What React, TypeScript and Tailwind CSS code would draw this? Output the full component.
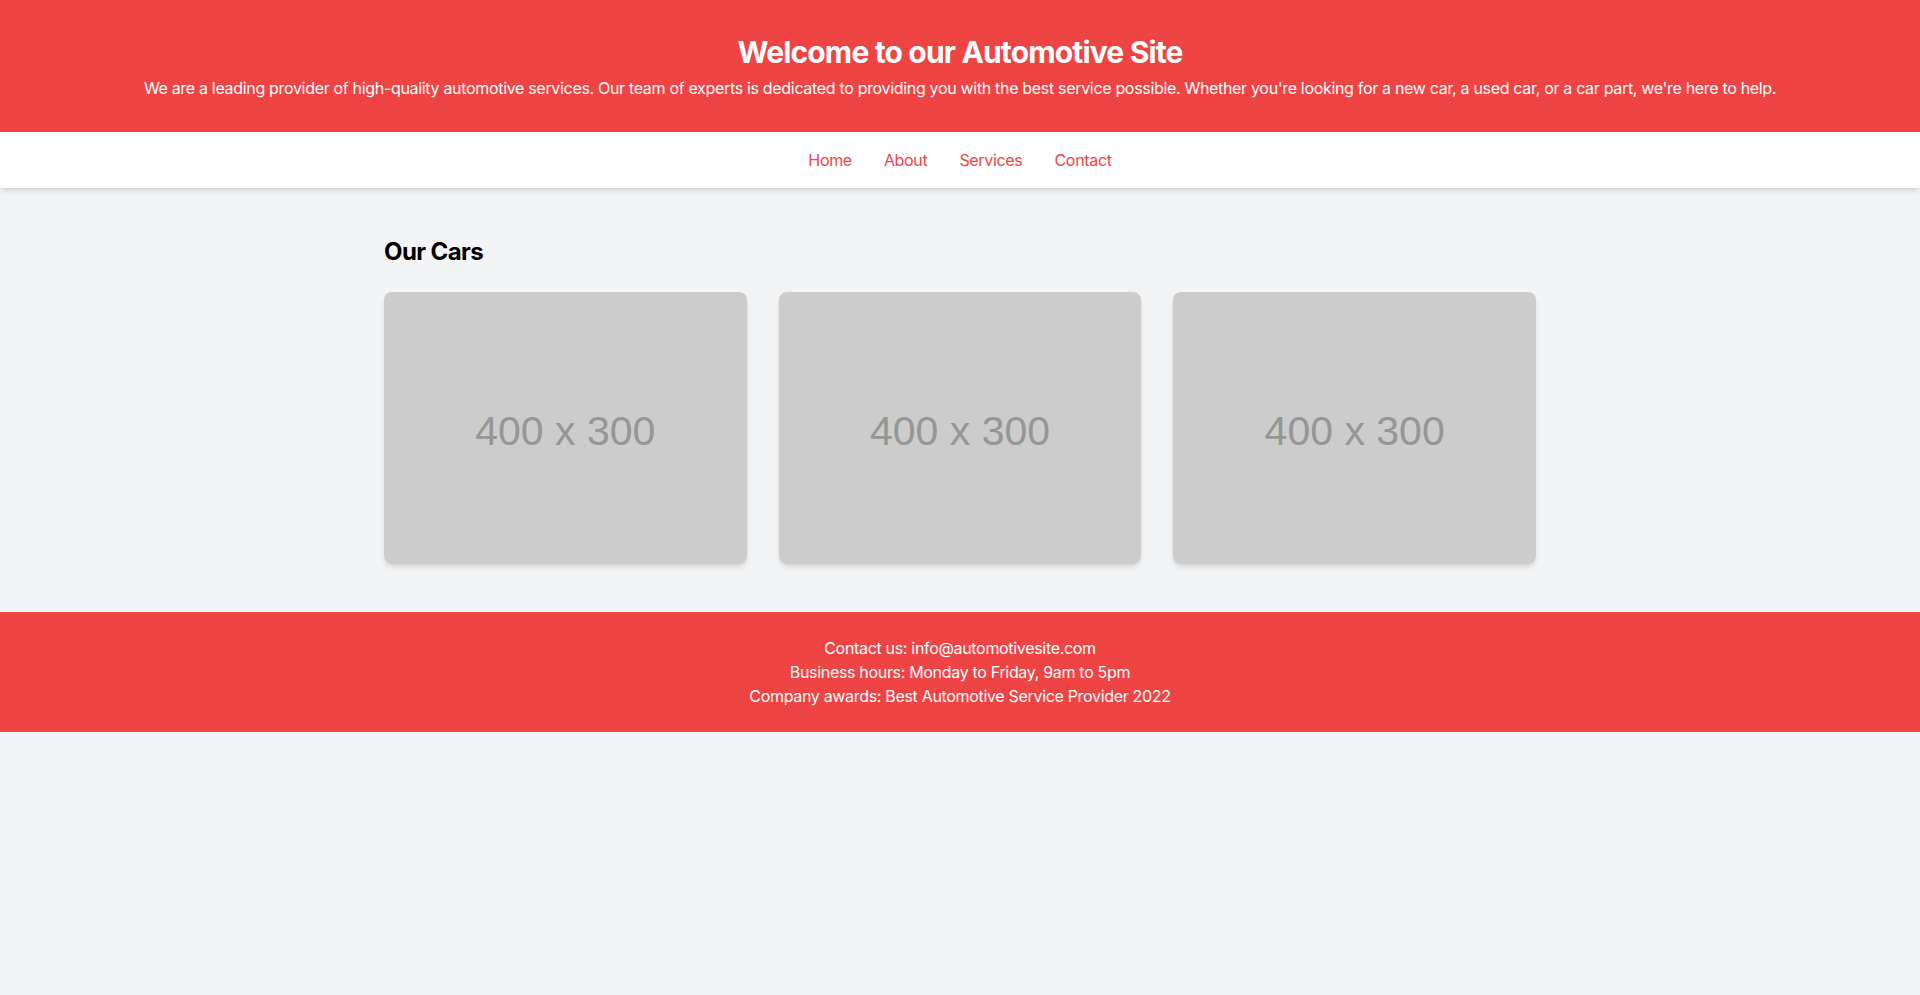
const cars = [1, 2, 3];

export default function App() {
  return (
    <div className="min-h-screen bg-gray-100 font-['Inter',sans-serif] tracking-[-0.02em]">
      {/* Header */}
      <header className="bg-[#ef4444] py-8 text-center text-white">
        <h1 className="mt-0.5 mb-1.5 text-3xl font-bold tracking-[-0.028em]">Welcome to our Automotive Site</h1>
        <p className="text-base">
          We are a leading provider of high-quality automotive services. Our team of experts is dedicated to providing
          you with the best service possible. Whether you're looking for a new car, a used car, or a car part, we're here
          to help.
        </p>
      </header>

      {/* Nav */}
      <nav className="bg-white py-4 shadow-md">
        <ul className="flex justify-center gap-8 text-base text-[#ef4444]">
          <li><a href="#">Home</a></li>
          <li><a href="#">About</a></li>
          <li><a href="#">Services</a></li>
          <li><a href="#">Contact</a></li>
        </ul>
      </nav>

      {/* Cars */}
      <main className="mx-auto max-w-6xl py-12">
        <h2 className="mb-6 text-2xl font-bold tracking-[-0.025em] text-black">Our Cars</h2>
        <div className="grid grid-cols-3 gap-8">
          {cars.map((c) => (
            <div key={c} className="overflow-hidden rounded-lg shadow-md">
              <div className="flex aspect-[4/3] w-full items-center justify-center bg-[#cccccc]">
                <span className="mt-2 font-['Liberation_Sans',Arial,sans-serif] text-[41px] tracking-normal text-[#969696]">
                  400 x 300
                </span>
              </div>
            </div>
          ))}
        </div>
      </main>

      {/* Footer */}
      <footer className="bg-[#ef4444] py-6 text-center text-base text-white">
        <p>Contact us: info@automotivesite.com</p>
        <p>Business hours: Monday to Friday, 9am to 5pm</p>
        <p>Company awards: Best Automotive Service Provider 2022</p>
      </footer>
    </div>
  );
}
